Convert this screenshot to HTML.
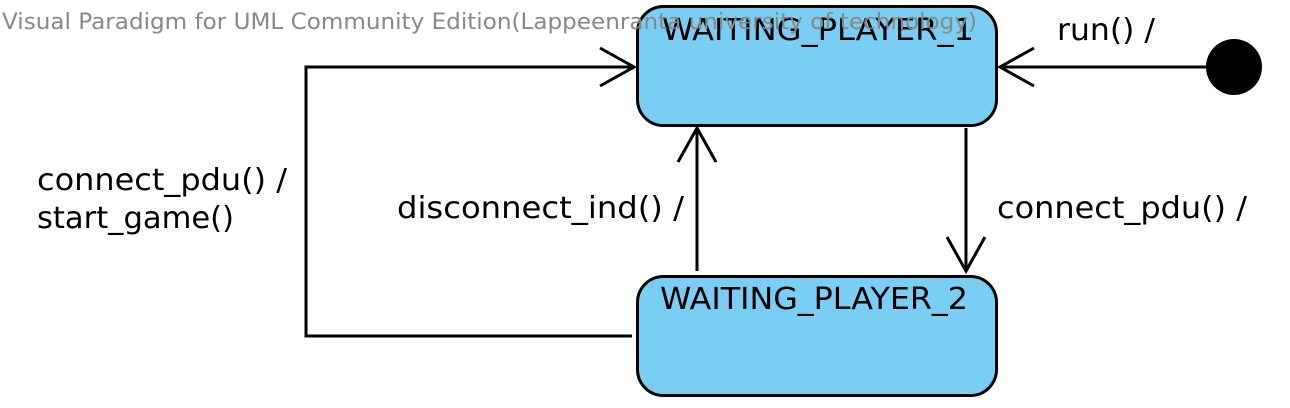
<!DOCTYPE html>
<html><head><style>html,body{margin:0;padding:0;background:#fff;}svg{display:block}</style></head>
<body>
<svg width="1290" height="408" viewBox="0 0 1290 408" xmlns="http://www.w3.org/2000/svg">
<g fill="#7acef4" stroke="#000" stroke-width="3">
<rect x="637.5" y="6.5" width="359" height="119" rx="26" ry="26"/>
<rect x="637.5" y="276.5" width="359" height="119" rx="26" ry="26"/>
</g>
<g fill="none" stroke="#000" stroke-width="3">
<polyline points="632,336 306,336 306,67 634,67"/>
<polyline points="600,48 634,67 600,86"/>
<line x1="697" y1="271" x2="697" y2="128"/>
<polyline points="678,162 697,128 716,162"/>
<line x1="966" y1="128" x2="966" y2="271"/>
<polyline points="947,237 966,271 985,237"/>
<line x1="1206" y1="67" x2="1000" y2="67"/>
<polyline points="1034,48 1000,67 1034,86"/>
</g>
<circle cx="1234" cy="67" r="28" fill="#000"/>
<g font-family="'DejaVu Sans','Liberation Sans',sans-serif" font-size="30" fill="#000">
<text x="662" y="40" textLength="312" lengthAdjust="spacingAndGlyphs">WAITING_PLAYER_1</text>
<text x="660" y="309" textLength="308" lengthAdjust="spacingAndGlyphs">WAITING_PLAYER_2</text>
<text x="1057" y="40" textLength="98" lengthAdjust="spacingAndGlyphs">run() /</text>
<text x="37" y="190" textLength="250" lengthAdjust="spacingAndGlyphs">connect_pdu() /</text>
<text x="37" y="228" textLength="197" lengthAdjust="spacingAndGlyphs">start_game()</text>
<text x="397" y="218" textLength="287" lengthAdjust="spacingAndGlyphs">disconnect_ind() /</text>
<text x="997" y="218" textLength="250" lengthAdjust="spacingAndGlyphs">connect_pdu() /</text>
</g>
<text x="2" y="29" font-family="'DejaVu Sans','Liberation Sans',sans-serif" font-size="22" fill="#888" textLength="975" lengthAdjust="spacingAndGlyphs">Visual Paradigm for UML Community Edition(Lappeenranta university of technology)</text>
</svg>
</body></html>
